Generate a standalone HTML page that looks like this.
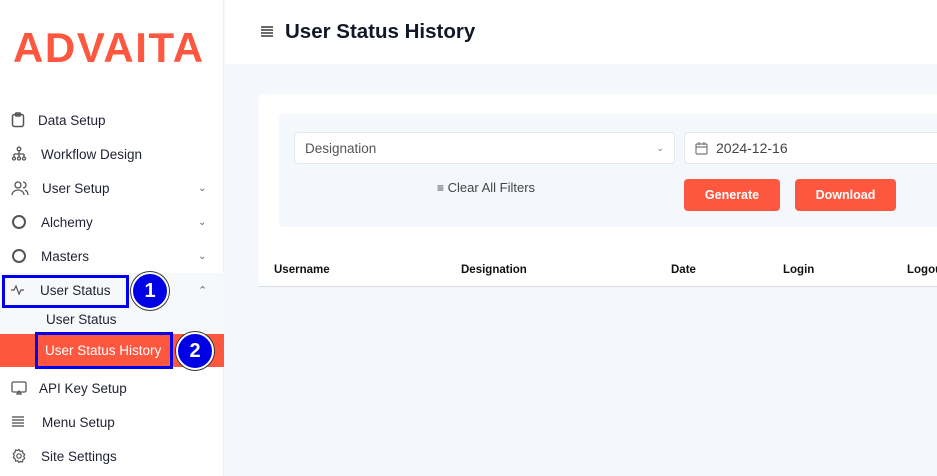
<!DOCTYPE html>
<html><head><style>
*{box-sizing:border-box;margin:0;padding:0}
body{width:937px;height:476px;overflow:hidden;font-family:"Liberation Sans",sans-serif;background:#f4f7fb;position:relative;color:#1f2937}
.side{position:absolute;left:0;top:0;width:224px;height:476px;background:#fff;border-right:1px solid #eceef2}
.logo{position:absolute;left:13px;top:24px;font-size:42px;font-weight:bold;color:#fe5740;letter-spacing:1.6px}
.item{position:absolute;left:0;width:224px;height:34px;font-size:13.5px;color:#1f2233;display:flex;align-items:center}
.item svg{position:absolute;left:11px}
.item span{position:absolute}
.chev{position:absolute;left:198px;font-size:10px;color:#666}
.hdr{position:absolute;left:225px;top:0;width:712px;height:64px;background:#fff}
.title{position:absolute;left:285px;top:20px;font-size:20.5px;font-weight:bold;color:#111827}
.card{position:absolute;left:259px;top:94px;width:678px;height:168px;background:#fff;border-radius:4px 0 0 0}
.panel{position:absolute;left:279px;top:114px;width:658px;height:113px;background:#f4f7fb;border-radius:4px 0 0 4px}
.inp{position:absolute;background:#fff;border:1px solid #e5e7eb;border-radius:4px;height:32px;font-size:13.5px;color:#555;display:flex;align-items:center}
.btn{position:absolute;top:179px;height:32px;background:#fe5740;border-radius:4px;color:#fff;font-weight:bold;font-size:12.5px;display:flex;align-items:center;justify-content:center}
.th{position:absolute;left:259px;top:255px;width:678px;height:32px;background:#fff;border-bottom:1px solid #d8dbe0}
.th span{position:absolute;top:9px;font-size:11.5px;font-weight:bold;color:#111}
.box{position:absolute;border:3px solid #0000ee}
.num{position:absolute;width:38px;height:38px;border-radius:50%;background:#0000e6;border:2px solid #fff;box-shadow:0 0 0 1px #333;color:#fff;font-weight:bold;font-size:20px;display:flex;align-items:center;justify-content:center}
</style></head><body>
<div class="side">
<div class="logo">ADVAITA</div>
<div class="item" style="top:103px"><svg width="14" height="16" viewBox="0 0 14 16" fill="none" stroke="#555" stroke-width="1.5"><rect x="1.5" y="2.5" width="11" height="12" rx="2"/><rect x="4.5" y="1" width="5" height="3" rx="1"/></svg><span style="left:38px">Data Setup</span></div>
<div class="item" style="top:137px"><svg width="16" height="16" viewBox="0 0 16 16" fill="none" stroke="#555" stroke-width="1.3"><circle cx="8" cy="3" r="1.8"/><path d="M8 5v3M3 8h10M3 8v3M8 8v3M13 8v3"/><circle cx="3" cy="12.5" r="1.5"/><circle cx="8" cy="12.5" r="1.5"/><circle cx="13" cy="12.5" r="1.5"/></svg><span style="left:41px">Workflow Design</span></div>
<div class="item" style="top:171px"><svg width="18" height="16" viewBox="0 0 18 16" fill="none" stroke="#555" stroke-width="1.3"><circle cx="7" cy="5" r="3"/><path d="M1 15c0-3 3-5 6-5s6 2 6 5M12 2a3 3 0 010 6M14 10c2 1 3 3 3 5"/></svg><span style="left:42px">User Setup</span><span class="chev">⌄</span></div>
<div class="item" style="top:205px"><svg width="16" height="16" viewBox="0 0 16 16" fill="none" stroke="#555" stroke-width="2"><circle cx="8" cy="8" r="6"/></svg><span style="left:41px">Alchemy</span><span class="chev">⌄</span></div>
<div class="item" style="top:239px"><svg width="16" height="16" viewBox="0 0 16 16" fill="none" stroke="#555" stroke-width="2"><circle cx="8" cy="8" r="6"/></svg><span style="left:41px">Masters</span><span class="chev">⌄</span></div>
<div class="item" style="top:273px;background:#f7f8fa"><svg width="14" height="14" viewBox="0 0 14 14" fill="none" stroke="#555" stroke-width="1.2"><path d="M0 7h3l2-4 3 8 2-4h3"/></svg><span style="left:40px">User Status</span><span class="chev" style="font-size:11px">⌃</span></div>
<div class="item" style="top:304px;height:30px;background:#f7f8fa"><span style="left:46px;font-size:13.5px">User Status</span></div>
<div class="item" style="top:334px;height:33px;background:#fe5740;color:#fff"><span style="left:45px;font-size:13.5px">User Status History</span></div>
<div class="item" style="top:371px"><svg width="16" height="14" viewBox="0 0 16 14" fill="none" stroke="#555" stroke-width="1.3"><rect x="1" y="1" width="14" height="10" rx="1.5"/><path d="M6 13l2-3 2 3z"/></svg><span style="left:39px">API Key Setup</span></div>
<div class="item" style="top:405px"><svg width="14" height="14" viewBox="0 0 14 14" fill="none" stroke="#666" stroke-width="1.4"><path d="M1 2h12M1 5h12M1 8h12M1 11h12"/></svg><span style="left:42px">Menu Setup</span></div>
<div class="item" style="top:439px"><svg width="16" height="16" viewBox="0 0 16 16" fill="none" stroke="#555" stroke-width="1.2"><circle cx="8" cy="8" r="2.2"/><path d="M8 1.5l1.3 1.8 2.2-.4.4 2.2 1.8 1.3-1 2 1 2-1.8 1.3-.4 2.2-2.2-.4L8 14.5l-1.3-1.8-2.2.4-.4-2.2-1.8-1.3 1-2-1-2 1.8-1.3.4-2.2 2.2.4z"/></svg><span style="left:41px">Site Settings</span></div>
</div>
<div class="box" style="left:2px;top:275px;width:127px;height:33px"></div>
<div class="num" style="left:131px;top:272px">1</div>
<div class="box" style="left:35px;top:332px;width:138px;height:37px"></div>
<div class="num" style="left:176px;top:332px">2</div>
<div class="hdr"></div>
<svg style="position:absolute;left:261px;top:26px" width="12" height="11" viewBox="0 0 12 11" stroke="#111" stroke-width="1.2"><path d="M0 1h12M0 4h12M0 7h12M0 10h12"/></svg>
<div class="title">User Status History</div>
<div class="card"></div>
<div class="panel"></div>
<div class="inp" style="left:294px;top:132px;width:381px"><span style="margin-left:10px">Designation</span><span style="position:absolute;right:10px;font-size:9px;color:#777">⌄</span></div>
<div class="inp" style="left:684px;top:132px;width:260px;color:#444"><svg style="margin-left:10px" width="13" height="13" viewBox="0 0 13 13" fill="none" stroke="#777" stroke-width="1.2"><rect x="1" y="2" width="11" height="10" rx="1"/><path d="M1 5h11M4 0v3M9 0v3"/></svg><span style="margin-left:8px;font-size:14px">2024-12-16</span></div>
<div style="position:absolute;left:437px;top:180px;font-size:13px;color:#444"><span style="font-size:12px">≡</span> Clear All Filters</div>
<div class="btn" style="left:684px;width:96px">Generate</div>
<div class="btn" style="left:795px;width:101px">Download</div>
<div class="th"><span style="left:15px">Username</span><span style="left:202px">Designation</span><span style="left:412px">Date</span><span style="left:524px">Login</span><span style="left:648px">Logout</span></div>
</body></html>
